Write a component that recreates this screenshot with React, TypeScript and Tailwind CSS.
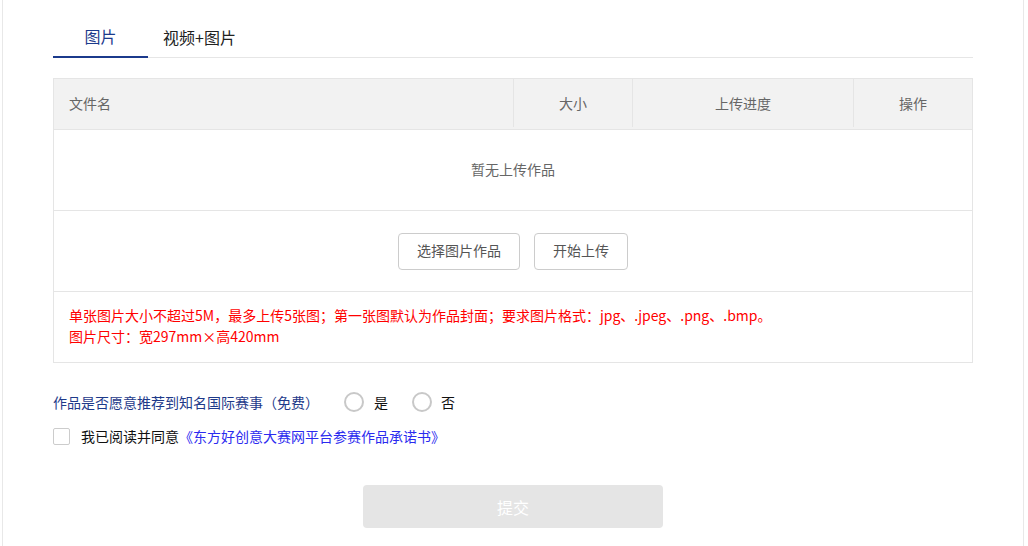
import React from "react";

const font = { fontFamily: '"Microsoft YaHei", "Noto Sans CJK SC", "Noto Sans", sans-serif' };

export default function App() {
  return (
    <div className="min-h-[546px] w-[1028px] bg-white" style={font}>
      <div className="ml-[2px] w-[1022px] min-h-[546px] border-x border-[#e8e8e8] bg-white px-[50px] pt-[20px]">
        {/* tabs */}
        <div className="flex h-[38px] border-b border-[#e6e6e6]">
          <div className="-mb-px flex w-[95px] items-center justify-center border-b-2 border-[#1b3a8c] pb-[4px] text-[16px] text-[#1b3a8c]">
            图片
          </div>
          <div className="flex items-center pb-[4px] pl-[15px] text-[16px] text-[#222]">视频+图片</div>
        </div>

        {/* table */}
        <div className="mt-[20px] border border-[#e5e5e5] text-[14px]">
          <div className="flex h-[50px] items-center bg-[#f2f2f2] pb-[2px] text-[#666]">
            <div className="flex h-full w-[459px] items-center pl-[15px]">文件名</div>
            <div className="flex h-full w-[119px] items-center justify-center border-l border-[#e5e5e5]">大小</div>
            <div className="flex h-full w-[221px] items-center justify-center border-l border-[#e5e5e5]">上传进度</div>
            <div className="flex h-full flex-1 items-center justify-center border-l border-[#e5e5e5]">操作</div>
          </div>
          <div className="flex h-[81px] items-center justify-center border-t border-[#e5e5e5] pb-[2px] text-[#666]">
            暂无上传作品
          </div>
          <div className="flex h-[81px] items-center justify-center gap-[14px] border-t border-[#e5e5e5]">
            <button className="h-[37px] w-[122px] rounded-[4px] border border-[#cccccc] bg-white pb-[1px] text-[14px] text-[#555]">
              选择图片作品
            </button>
            <button className="h-[37px] w-[94px] rounded-[4px] border border-[#cccccc] bg-white pb-[1px] text-[14px] text-[#555]">
              开始上传
            </button>
          </div>
          <div className="flex h-[71px] flex-col justify-center border-t border-[#e5e5e5] pb-[2px] pl-[15px] text-[14px] leading-[21px] text-[#ff0000]">
            <div>单张图片大小不超过5M，最多上传5张图；第一张图默认为作品封面；要求图片格式：jpg、.jpeg、.png、.bmp。</div>
            <div>图片尺寸：宽297mm×高420mm</div>
          </div>
        </div>

        {/* question */}
        <div className="mt-[28px] flex h-[22px] items-center text-[14px]">
          <span className="inline-block w-[263px] whitespace-nowrap text-[#1e3a8a]">作品是否愿意推荐到知名国际赛事（免费）</span>
          <label className="ml-[28px] flex items-center">
            <span className="h-[20px] w-[20px] rounded-full border-2 border-[#c8c8c8] bg-white" />
            <span className="ml-[10px] text-[#111]">是</span>
          </label>
          <label className="ml-[24px] flex items-center">
            <span className="h-[20px] w-[20px] rounded-full border-2 border-[#c8c8c8] bg-white" />
            <span className="ml-[9px] text-[#111]">否</span>
          </label>
        </div>

        {/* agreement */}
        <div className="mt-[13px] flex h-[20px] items-center text-[14px]">
          <span className="h-[17px] w-[17px] rounded-[2px] border border-[#cccccc] bg-white" />
          <span className="ml-[11px] text-[#111]">我已阅读并同意</span>
          <span className="text-[#2b2bef]">《东方好创意大赛网平台参赛作品承诺书》</span>
        </div>

        {/* submit */}
        <div className="mt-[39px] flex justify-center">
          <button className="h-[43px] w-[300px] rounded-[4px] bg-[#e5e5e5] text-[16px] text-white">提交</button>
        </div>
      </div>
    </div>
  );
}
